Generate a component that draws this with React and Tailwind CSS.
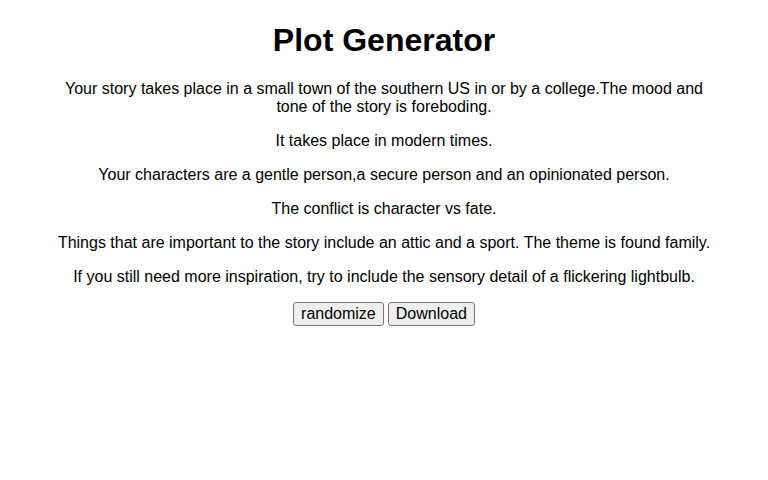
export default function App() {
  const p = "mt-4 leading-[18px]";
  return (
    <div className="bg-white min-h-[480px] pt-[22px] text-black" style={{ fontFamily: '"Liberation Sans", Arial, sans-serif' }}>
      <div className="mx-auto w-[660px] text-center text-base">
        <h1 className="text-[32px] font-bold leading-[37px]">Plot Generator</h1>
        <p className="mt-[21px] leading-[18px]">Your story takes place in a small town of the southern US in or by a college.The mood and tone of the story is foreboding.</p>
        <p className={p}>It takes place in modern times.</p>
        <p className={p}>Your characters are a gentle person,a secure person and an opinionated person.</p>
        <p className={p}>The conflict is character vs fate.</p>
        <p className={p}>Things that are important to the story include an attic and a sport. The theme is found family.</p>
        <p className={p}>If you still need more inspiration, try to include the sensory detail of a flickering lightbulb.</p>
        <div className="mt-4 flex justify-center gap-1">
          <button className="border border-[#767676] rounded-[3px] bg-[#efefef] px-[7px] py-[2px] leading-[18px] text-base">randomize</button>
          <button className="border border-[#767676] rounded-[3px] bg-[#efefef] px-[7px] py-[2px] leading-[18px] text-base">Download</button>
        </div>
      </div>
    </div>
  );
}
